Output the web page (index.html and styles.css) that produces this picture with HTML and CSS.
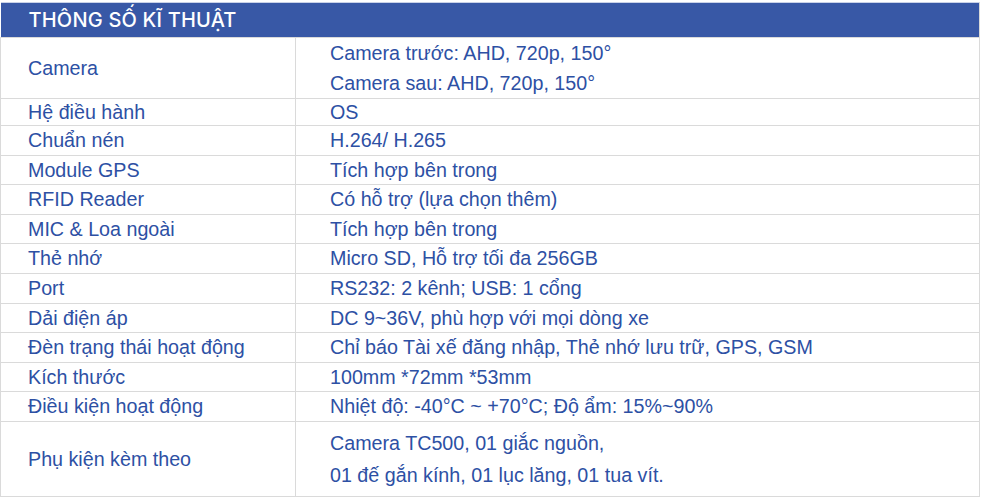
FILE: index.html
```html
<!DOCTYPE html>
<html lang="vi">
<head>
<meta charset="utf-8">
<title>Thông số kĩ thuật</title>
<link rel="stylesheet" href="styles.css">
</head>
<body>
<table class="spec">
  <colgroup>
    <col class="col-label">
    <col class="col-value">
  </colgroup>
  <thead>
    <tr><th colspan="2" class="spec-title">THÔNG SỐ KĨ THUẬT</th></tr>
  </thead>
  <tbody>
    <tr class="row-double"><td class="label">Camera</td><td class="value">Camera trước: AHD, 720p, 150°<br>Camera sau: AHD, 720p, 150°</td></tr>
    <tr class="row-short"><td class="label">Hệ điều hành</td><td class="value">OS</td></tr>
    <tr><td class="label">Chuẩn nén</td><td class="value">H.264/ H.265</td></tr>
    <tr><td class="label">Module GPS</td><td class="value">Tích hợp bên trong</td></tr>
    <tr><td class="label">RFID Reader</td><td class="value">Có hỗ trợ (lựa chọn thêm)</td></tr>
    <tr><td class="label">MIC &amp; Loa ngoài</td><td class="value">Tích hợp bên trong</td></tr>
    <tr><td class="label">Thẻ nhớ</td><td class="value">Micro SD, Hỗ trợ tối đa 256GB</td></tr>
    <tr><td class="label">Port</td><td class="value">RS232: 2 kênh; USB: 1 cổng</td></tr>
    <tr><td class="label">Dải điện áp</td><td class="value">DC 9~36V, phù hợp với mọi dòng xe</td></tr>
    <tr><td class="label">Đèn trạng thái hoạt động</td><td class="value">Chỉ báo Tài xế đăng nhập, Thẻ nhớ lưu trữ, GPS, GSM</td></tr>
    <tr><td class="label">Kích thước</td><td class="value">100mm *72mm *53mm</td></tr>
    <tr><td class="label">Điều kiện hoạt động</td><td class="value">Nhiệt độ: -40°C ~ +70°C; Độ ẩm: 15%~90%</td></tr>
    <tr class="row-last"><td class="label">Phụ kiện kèm theo</td><td class="value">Camera TC500, 01 giắc nguồn,<br>01 đế gắn kính, 01 lục lăng, 01 tua vít.</td></tr>
  </tbody>
</table>
</body>
</html>
```
FILE: styles.css
```css
html, body {
  margin: 0;
  padding: 0;
  background: #ffffff;
}

body {
  padding-top: 2px;
}

.spec {
  width: 980px;
  border-collapse: collapse;
  table-layout: fixed;
  font-family: "Liberation Sans", Arial, sans-serif;
  font-size: 19.7px;
  color: #2d50a4;
}

.col-label {
  width: 295px;
}

.spec-title {
  background: #3858a6;
  color: #ffffff;
  font-family: Inter, "Open Sans", sans-serif;
  font-weight: 500;
  font-size: 20px;
  letter-spacing: 0.2px;
  text-align: left;
  height: 34px;
  padding: 0 0 0 28px;
  border-top: 1px solid #c9d2e8;
  border-right: 1px solid #d9d9d9;
}

.spec td {
  border: 1px solid #dadada;
  vertical-align: middle;
  line-height: 28.6px;
  padding: 0;
  white-space: nowrap;
}

.label {
  padding-left: 27px !important;
}

.value {
  padding-left: 34px !important;
}

.row-double td {
  line-height: 30px;
}

.row-short td {
  line-height: 26px;
}

.row-last td {
  line-height: 32px;
  padding-top: 5px !important;
  padding-bottom: 5px !important;
}
```
